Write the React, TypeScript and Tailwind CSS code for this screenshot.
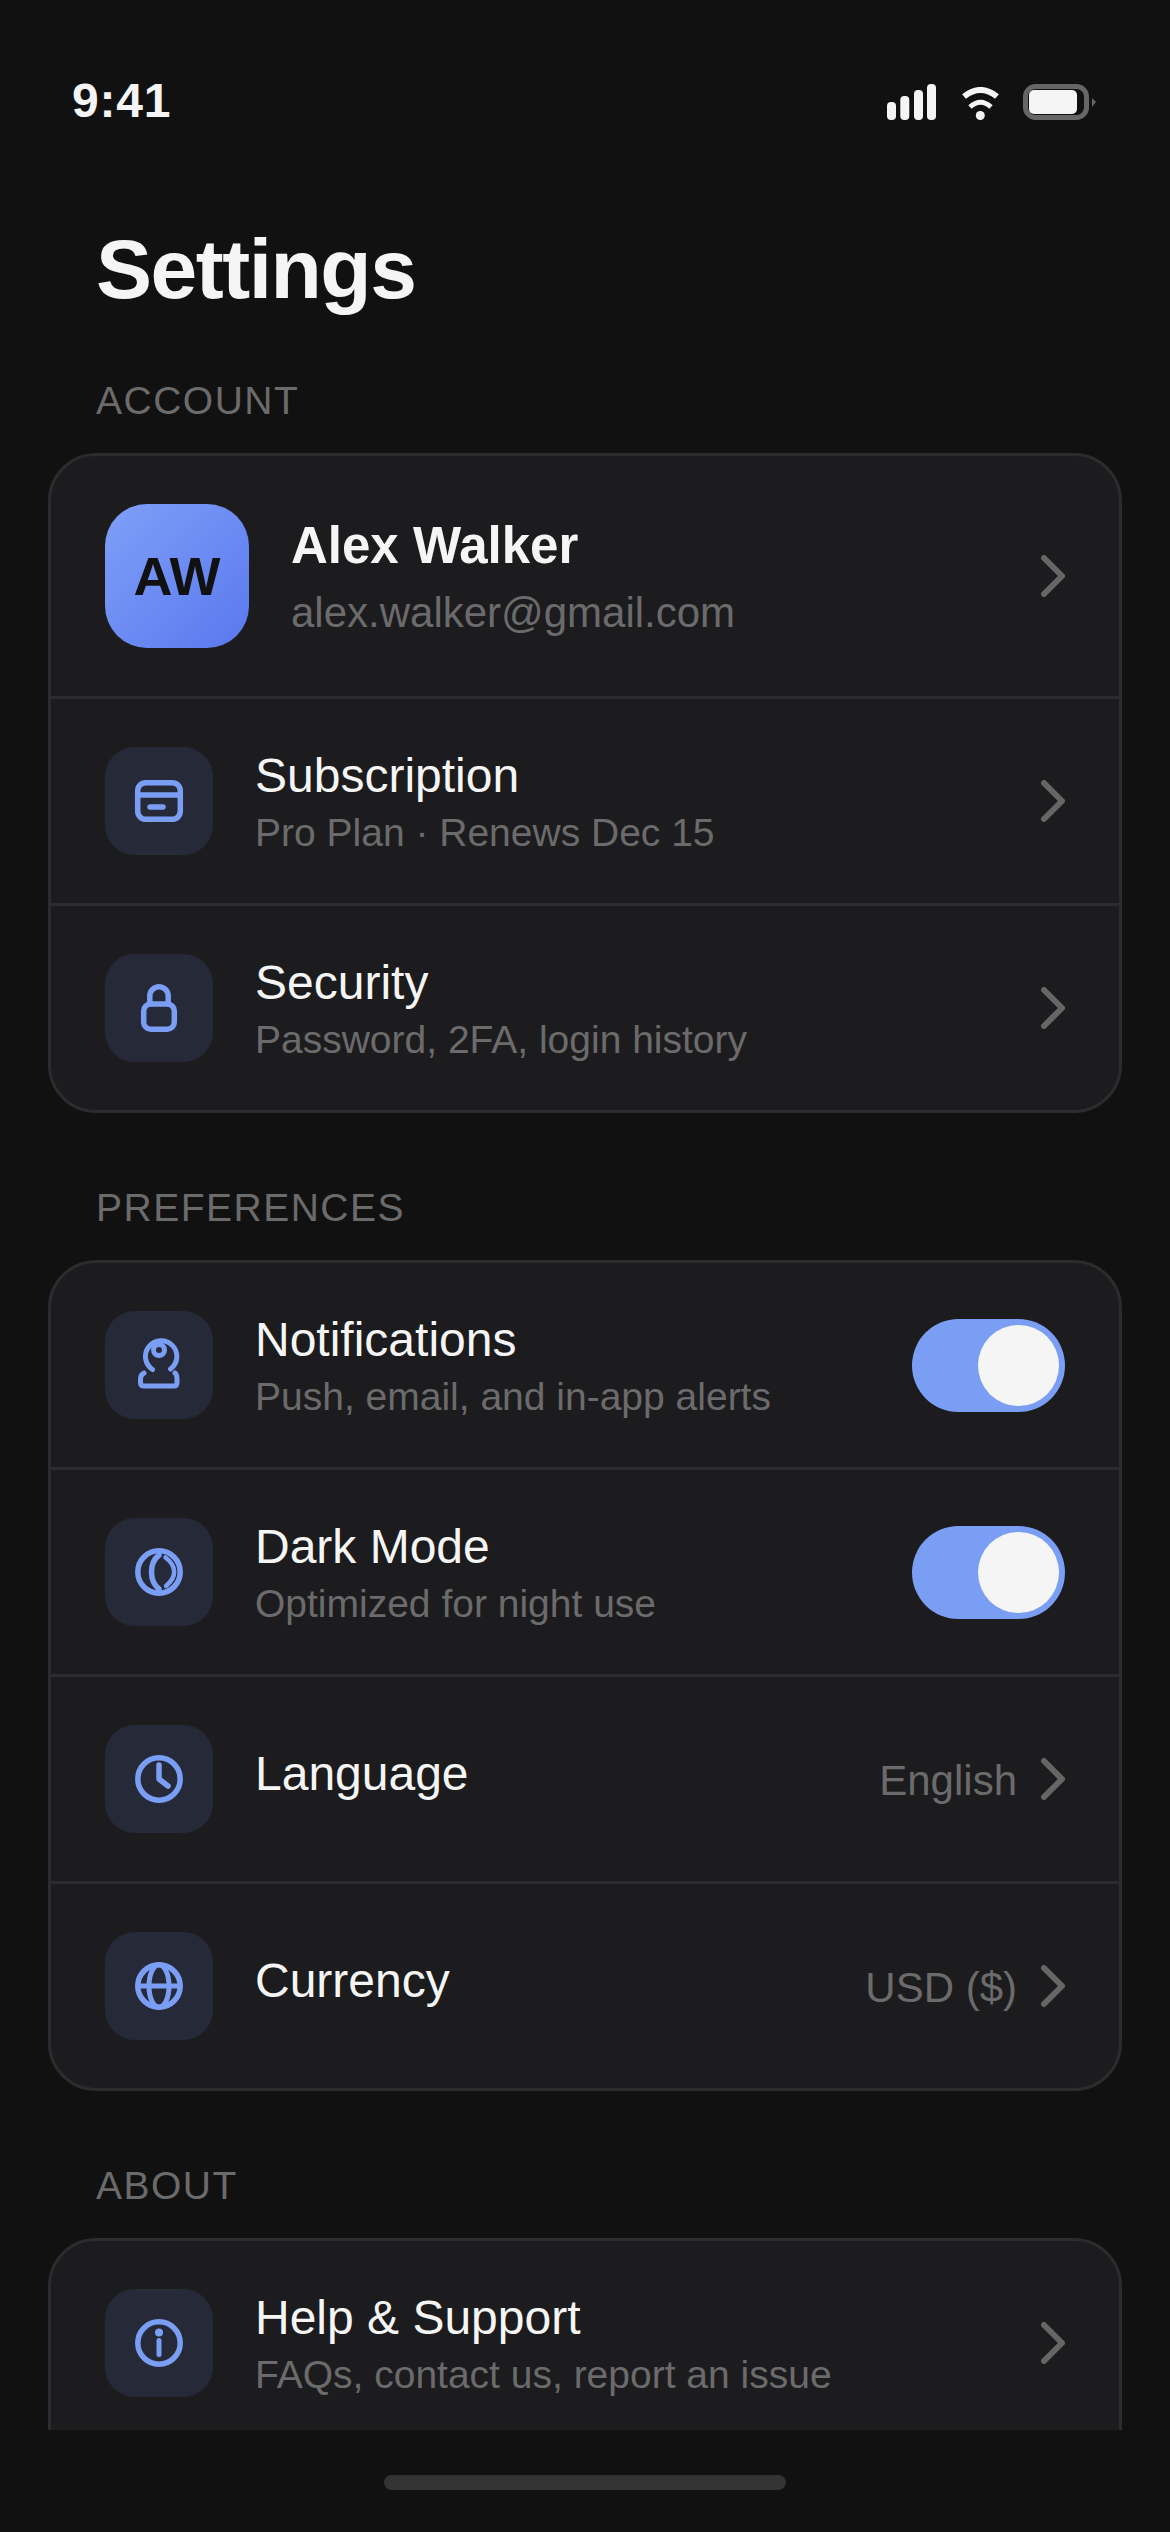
import React from "react";

const Chevron = () => (
  <svg width="24" height="42" viewBox="0 0 24 42" fill="none" className="shrink-0">
    <path d="M3 3L21 21L3 39" stroke="#666666" strokeWidth="6" strokeLinecap="round" strokeLinejoin="round" />
  </svg>
);

const Glyph = ({ children }: { children: React.ReactNode }) => (
  <svg width="60" height="60" viewBox="0 0 60 60" fill="none" stroke="#7b9ef5" strokeWidth="5.5" strokeLinecap="round" strokeLinejoin="round">
    {children}
  </svg>
);

const CardIcon = () => (
  <Glyph>
    <rect x="8.7" y="11.7" width="42.6" height="36.6" rx="8" />
    <path d="M8.7 24H51.3" />
    <path d="M21 36H34" />
  </Glyph>
);
const LockIcon = () => (
  <Glyph>
    <rect x="14.7" y="26" width="30.6" height="25.2" rx="7" />
    <path d="M20.8 26V18a9.2 9.2 0 0 1 18.4 0V26" />
  </Glyph>
);
const BellIcon = () => (
  <Glyph>
    <path d="M23.5 34.5A15.7 15.7 0 1 1 41.5 34" strokeWidth="5" />
    <circle cx="30" cy="15" r="5.5" strokeWidth="5" />
    <path d="M15 38C12 39.5 11.5 42 11.5 44V47.5C11.5 50 13 51 15 51H45C47 51 48 50 48 47.5V44C48 42 48 39.5 46 38" strokeWidth="5" />
  </Glyph>
);
const MoonIcon = () => (
  <Glyph>
    <circle cx="30" cy="30" r="21.2" />
    <path d="M30 13C20 21 20 39 30 47" />
    <path d="M36.5 15.5C48 24 48 35 37 44" strokeWidth="4.5" />
  </Glyph>
);
const ClockIcon = () => (
  <Glyph>
    <circle cx="30" cy="30" r="21.2" />
    <path d="M30 16V30L39 37" />
  </Glyph>
);
const GlobeIcon = () => (
  <Glyph>
    <circle cx="30" cy="30" r="21.2" />
    <path d="M8.8 30H51.2" strokeWidth="5" />
    <ellipse cx="30" cy="30" rx="10" ry="21.2" strokeWidth="5" />
  </Glyph>
);
const InfoIcon = () => (
  <Glyph>
    <circle cx="30" cy="30" r="21.2" />
    <path d="M30 27.5V41.5" strokeWidth="5" />
    <circle cx="30" cy="19.4" r="4" fill="#7b9ef5" stroke="none" />
  </Glyph>
);

const Toggle = () => (
  <div className="flex h-[93px] w-[153px] shrink-0 items-center justify-end rounded-full bg-[#7b9ef5] p-[6px]">
    <div className="h-[81px] w-[81px] rounded-full bg-[#f5f5f5]" />
  </div>
);

const Row = ({
  icon,
  title,
  sub,
  value,
  toggle,
}: {
  icon: React.ReactNode;
  title: string;
  sub?: string;
  value?: string;
  toggle?: boolean;
}) => (
  <div className="flex h-[204px] shrink-0 items-center px-[54px]">
    <div className="flex h-[108px] w-[108px] shrink-0 items-center justify-center rounded-[30px] bg-[#262a38]">{icon}</div>
    <div className={sub ? "ml-[42px] flex min-w-0 flex-1 flex-col gap-[6px]" : "ml-[42px] flex min-w-0 flex-1 flex-col pb-[10px]"}>
      <div className="text-[48px] leading-[56px] text-[#f5f5f5]">{title}</div>
      {sub && <div className="text-[39px] leading-[45px] text-[#6b6b6b]">{sub}</div>}
    </div>
    {value && <div className="mr-[24px] mt-[3px] text-[42px] leading-[48px] text-[#6b6b6b]">{value}</div>}
    {toggle ? <Toggle /> : <Chevron />}
  </div>
);

const Divider = () => <div className="h-[3px] bg-[#2c2c2e]" />;

const Section = ({ label, children, top }: { label: string; children: React.ReactNode; top: string }) => (
  <section className={top}>
    <div className="mb-[30px] ml-[96px] text-[39px] leading-[45px] tracking-[1.5px] text-[#6b6b6b]">{label}</div>
    <div className="mx-[48px] overflow-hidden rounded-[48px] border-[3px] border-[#2c2c2e] bg-[#1c1c1e]">{children}</div>
  </section>
);

export default function App() {
  return (
    <div className="flex h-[2532px] w-[1170px] flex-col overflow-hidden bg-[#111111] font-['Liberation_Sans',Arial,sans-serif] text-[#f5f5f5]">
      <div className="relative flex-1 overflow-hidden">
        <div className="flex h-[174px] items-start justify-between pl-[72px] pr-[74px] pt-[73px]">
          <div className="text-[48px] font-bold leading-[55px] tracking-[0.75px]">9:41</div>
          <div className="mt-[11px] flex items-end">
            <svg width="49" height="36" viewBox="0 0 49 36" fill="#f5f5f5">
              <rect x="0" y="18" width="9" height="18" rx="4" />
              <rect x="13.3" y="12" width="9" height="24" rx="4" />
              <rect x="27" y="6" width="9" height="30" rx="4" />
              <rect x="40" y="0" width="9" height="36" rx="4" />
            </svg>
            <svg className="ml-[26px]" width="37" height="33" viewBox="0 0 37 33" fill="none">
              <path d="M2 9.5Q18.5 -3.5 35 9.5" stroke="#f5f5f5" strokeWidth="6" />
              <path d="M8 20Q18.5 10.5 29 20" stroke="#f5f5f5" strokeWidth="5" />
              <circle cx="18.3" cy="28.5" r="4.5" fill="#f5f5f5" />
            </svg>
            <svg className="ml-[24px]" width="73" height="36" viewBox="0 0 73 36" fill="none">
              <rect x="2.5" y="2.5" width="61" height="31" rx="10" stroke="#666666" strokeWidth="5" />
              <rect x="6" y="6" width="48" height="24" rx="5" fill="#f5f5f5" />
              <path d="M69 14L73 18L69 23Z" fill="#666666" />
            </svg>
          </div>
        </div>

        <h1 className="ml-[96px] mt-[47px] text-[84px] font-bold leading-[97px] tracking-[-1.5px]">Settings</h1>

        <Section label="ACCOUNT" top="mt-[60px]">
          <div className="flex h-[240px] items-center px-[54px]">
            <div className="flex h-[144px] w-[144px] shrink-0 items-center justify-center rounded-[42px] bg-linear-to-br from-[#7f9ff8] to-[#5a78ee] text-[54px] font-bold text-[#111111]">
              AW
            </div>
            <div className="ml-[42px] flex min-w-0 flex-1 flex-col pt-[1px]">
              <div className="text-[51px] font-bold leading-[59px] text-[#f5f5f5]">Alex Walker</div>
              <div className="mt-[14px] text-[42px] leading-[48px] text-[#6b6b6b]">alex.walker@gmail.com</div>
            </div>
            <Chevron />
          </div>
          <Divider />
          <Row icon={<CardIcon />} title="Subscription" sub="Pro Plan · Renews Dec 15" />
          <Divider />
          <Row icon={<LockIcon />} title="Security" sub="Password, 2FA, login history" />
        </Section>

        <Section label="PREFERENCES" top="mt-[72px]">
          <Row icon={<BellIcon />} title="Notifications" sub="Push, email, and in-app alerts" toggle />
          <Divider />
          <Row icon={<MoonIcon />} title="Dark Mode" sub="Optimized for night use" toggle />
          <Divider />
          <Row icon={<ClockIcon />} title="Language" value="English" />
          <Divider />
          <Row icon={<GlobeIcon />} title="Currency" value="USD ($)" />
        </Section>

        <Section label="ABOUT" top="mt-[72px]">
          <Row icon={<InfoIcon />} title="Help & Support" sub="FAQs, contact us, report an issue" />
          <Divider />
          <div className="h-[204px]" />
        </Section>
      </div>
      <div className="flex h-[102px] shrink-0 justify-center bg-[#111111] pt-[45px]">
        <div className="h-[15px] w-[402px] rounded-[9px] bg-[#333333]" />
      </div>
    </div>
  );
}
